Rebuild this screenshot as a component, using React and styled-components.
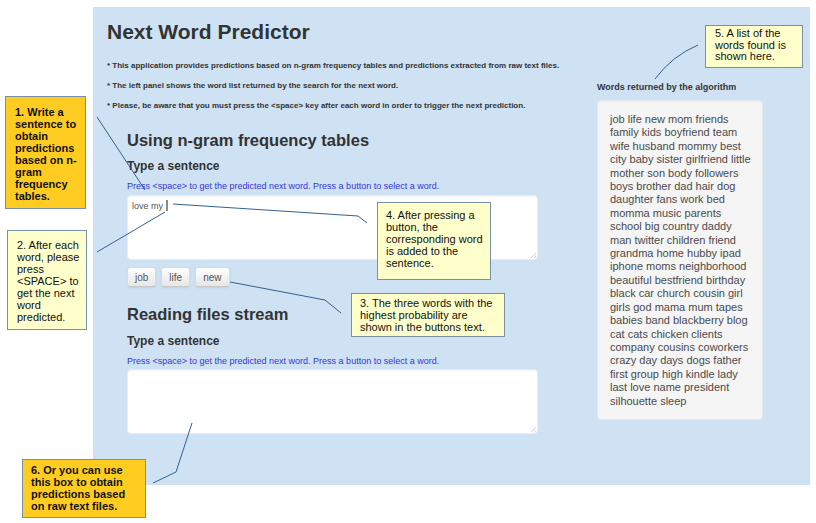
import React from 'react';
import styled, { createGlobalStyle } from 'styled-components';

const GlobalStyle = createGlobalStyle`
  html, body {
    margin: 0;
    padding: 0;
    background: #fff;
  }
  body {
    font-family: "Liberation Sans", Arial, sans-serif;
  }
`;

const Canvas = styled.div`
  position: relative;
  width: 816px;
  height: 523px;
  box-sizing: border-box;
  padding: 7px 0 0 93px;
  overflow: hidden;
  background: #fff;
`;

const Panel = styled.div`
  width: 717px;
  height: 478px;
  box-sizing: border-box;
  padding: 0 47px 0 14px;
  background: #cfe2f3;
  display: grid;
  grid-template-columns: 470px 166px;
  column-gap: 20px;
  align-items: start;
`;

const Main = styled.div`
  display: flex;
  flex-direction: column;
`;

const Title = styled.h1`
  margin: 13px 0 0;
  font-size: 21px;
  line-height: 24px;
  font-weight: bold;
  color: #333;
`;

const Note = styled.p`
  margin: ${p => (p.$first ? '17px' : '10px')} 0 0;
  font-size: 8px;
  line-height: 10px;
  font-weight: bold;
  color: #333;
  white-space: nowrap;
`;

const Section = styled.div`
  display: flex;
  flex-direction: column;
  margin-left: 20px;
  width: 411px;
`;

const SectionTitle = styled.h2`
  margin: ${p => p.$gap}px 0 0;
  font-size: 16.5px;
  line-height: 20px;
  font-weight: bold;
  color: #333;
`;

const Label = styled.h3`
  margin: ${p => p.$gap || 9}px 0 0;
  font-size: 12px;
  line-height: 14px;
  font-weight: bold;
  color: #333;
`;

const Hint = styled.div`
  margin-top: 8px;
  font-size: 9px;
  line-height: 11px;
  color: #3636d8;
  white-space: nowrap;
`;

const TextBox = styled.div`
  position: relative;
  margin-top: ${p => p.$gap || 3}px;
  height: 65px;
  box-sizing: border-box;
  padding: 4px 4px;
  background: #fff;
  border: 1px solid #e6edf4;
  border-radius: 4px;
  box-shadow: inset 0 1px 1px rgba(0, 0, 0, 0.04);
  font-size: 9px;
  line-height: 12px;
  color: #555;
`;

const Caret = styled.span`
  display: inline-block;
  width: 2px;
  height: 11px;
  margin-left: 3px;
  vertical-align: -2px;
  background: #8a8a8a;
`;

const Grip = styled.svg`
  position: absolute;
  right: 1px;
  bottom: 1px;
`;

const ButtonRow = styled.div`
  display: flex;
  gap: 5px;
  margin-top: 7px;
`;

const WordButton = styled.button`
  height: 20px;
  padding: 0 7px;
  font-family: "Liberation Sans", Arial, sans-serif;
  font-size: 10px;
  color: #555;
  background: linear-gradient(#ffffff, #e6e6e6);
  border: 1px solid #dadada;
  border-bottom-color: #c8c8c8;
  border-radius: 3px;
  box-shadow: 0 1px 2px rgba(0, 0, 0, 0.08);
`;

const Sidebar = styled.div`
  display: flex;
  flex-direction: column;
  padding-top: 75px;
`;

const SideLabel = styled.div`
  font-size: 9px;
  line-height: 11px;
  font-weight: bold;
  color: #333;
  white-space: nowrap;
`;

const Well = styled.div`
  margin-top: 7px;
  height: 320px;
  box-sizing: border-box;
  padding: 12px 6px 12px 12px;
  background: #f5f5f5;
  border: 1px solid #e6eaee;
  border-radius: 4px;
  box-shadow: inset 0 1px 1px rgba(0, 0, 0, 0.04);
  font-size: 11px;
  line-height: 13.4px;
  color: #4a4a4a;
`;

const WordLine = styled.div`
  white-space: nowrap;
`;

const Leaders = styled.svg`
  position: absolute;
  left: 0;
  top: 0;
  pointer-events: none;
`;

const Callout = styled.div`
  position: absolute;
  left: ${p => p.$x}px;
  top: ${p => p.$y}px;
  width: ${p => p.$w}px;
  height: ${p => p.$h}px;
  box-sizing: border-box;
  padding: ${p => p.$pad};
  background: ${p => (p.$strong ? '#ffcc22' : '#ffffcc')};
  border: 1px solid #7790a6;
  font-size: 11px;
  line-height: ${p => p.$lh || 12}px;
  font-weight: ${p => (p.$strong ? 'bold' : 'normal')};
  color: #111;
  white-space: nowrap;
`;

const words = [
  'job life new mom friends',
  'family kids boyfriend team',
  'wife husband mommy best',
  'city baby sister girlfriend little',
  'mother son body followers',
  'boys brother dad hair dog',
  'daughter fans work bed',
  'momma music parents',
  'school big country daddy',
  'man twitter children friend',
  'grandma home hubby ipad',
  'iphone moms neighborhood',
  'beautiful bestfriend birthday',
  'black car church cousin girl',
  'girls god mama mum tapes',
  'babies band blackberry blog',
  'cat cats chicken clients',
  'company cousins coworkers',
  'crazy day days dogs father',
  'first group high kindle lady',
  'last love name president',
  'silhouette sleep',
];

const callouts = [
  { x: 5, y: 96, w: 81, h: 113, pad: '9px 0 0 9px', strong: true,
    lines: ['1. Write a', 'sentence to', 'obtain', 'predictions', 'based on n-', 'gram', 'frequency', 'tables.'] },
  { x: 7, y: 230, w: 80, h: 100, pad: '8px 0 0 9px',
    lines: ['2. After each', 'word, please', 'press', '<SPACE> to', 'get the next', 'word', 'predicted.'] },
  { x: 351, y: 293, w: 154, h: 44, pad: '3px 0 0 8px',
    lines: ['3. The three words with the', 'highest probability are', 'shown in the buttons text.'] },
  { x: 377, y: 202, w: 114, h: 78, pad: '6px 0 0 8px',
    lines: ['4. After pressing a', 'button, the', 'corresponding word', 'is added to the', 'sentence.'] },
  { x: 705, y: 25, w: 98, h: 43, pad: '2px 0 0 9px', lh: 11.5,
    lines: ['5. A list of the', 'words found is', 'shown here.'] },
  { x: 22, y: 459, w: 124, h: 59, pad: '4px 0 0 8px', strong: true,
    lines: ['6. Or you can use', 'this box to obtain', 'predictions based', 'on raw text files.'] },
];

const Entry = ({ value, caret }) => (
  <TextBox $gap={caret ? 3 : 2}>
    {value}
    {caret && <Caret />}
    <Grip width="6" height="6" viewBox="0 0 6 6">
      <path d="M6 1 L1 6 M6 4 L4 6" stroke="#c4c4c4" strokeWidth="0.8" />
    </Grip>
  </TextBox>
);

export default function App() {
  return (
    <>
      <GlobalStyle />
      <Canvas>
        <Panel>
          <Main>
            <Title>Next Word Predictor</Title>
            <Note $first>* This application provides predictions based on n-gram frequency tables and predictions extracted from raw text files.</Note>
            <Note>* The left panel shows the word list returned by the search for the next word.</Note>
            <Note>* Please, be aware that you must press the &lt;space&gt; key after each word in order to trigger the next prediction.</Note>

            <Section>
              <SectionTitle $gap={19}>Using n-gram frequency tables</SectionTitle>
              <Label>Type a sentence</Label>
              <Hint>Press &lt;space&gt; to get the predicted next word. Press a button to select a word.</Hint>
              <Entry value="love my" caret />
              <ButtonRow>
                <WordButton>job</WordButton>
                <WordButton>life</WordButton>
                <WordButton>new</WordButton>
              </ButtonRow>

              <SectionTitle $gap={17}>Reading files stream</SectionTitle>
              <Label $gap={10}>Type a sentence</Label>
              <Hint>Press &lt;space&gt; to get the predicted next word. Press a button to select a word.</Hint>
              <Entry value="" />
            </Section>
          </Main>

          <Sidebar>
            <SideLabel>Words returned by the algorithm</SideLabel>
            <Well>
              {words.map(w => (
                <WordLine key={w}>{w}</WordLine>
              ))}
            </Well>
          </Sidebar>
        </Panel>

        <Leaders width="816" height="523" viewBox="0 0 816 523">
          <g fill="none" stroke="#35608e" strokeWidth="1">
            <line x1="97" y1="117" x2="145" y2="190" />
            <line x1="97" y1="252" x2="165" y2="212" />
            <polyline points="230,282 325,300 341,313" />
            <polyline points="173,204 358,216 367,223" />
            <path d="M698 45 Q672 56 655 79" />
            <polyline points="192,423 176,472 153,483" />
          </g>
        </Leaders>

        {callouts.map(c => (
          <Callout
            key={c.lines[0]}
            $x={c.x}
            $y={c.y}
            $w={c.w}
            $h={c.h}
            $pad={c.pad}
            $lh={c.lh}
            $strong={c.strong}
          >
            {c.lines.map(l => (
              <div key={l}>{l}</div>
            ))}
          </Callout>
        ))}
      </Canvas>
    </>
  );
}
